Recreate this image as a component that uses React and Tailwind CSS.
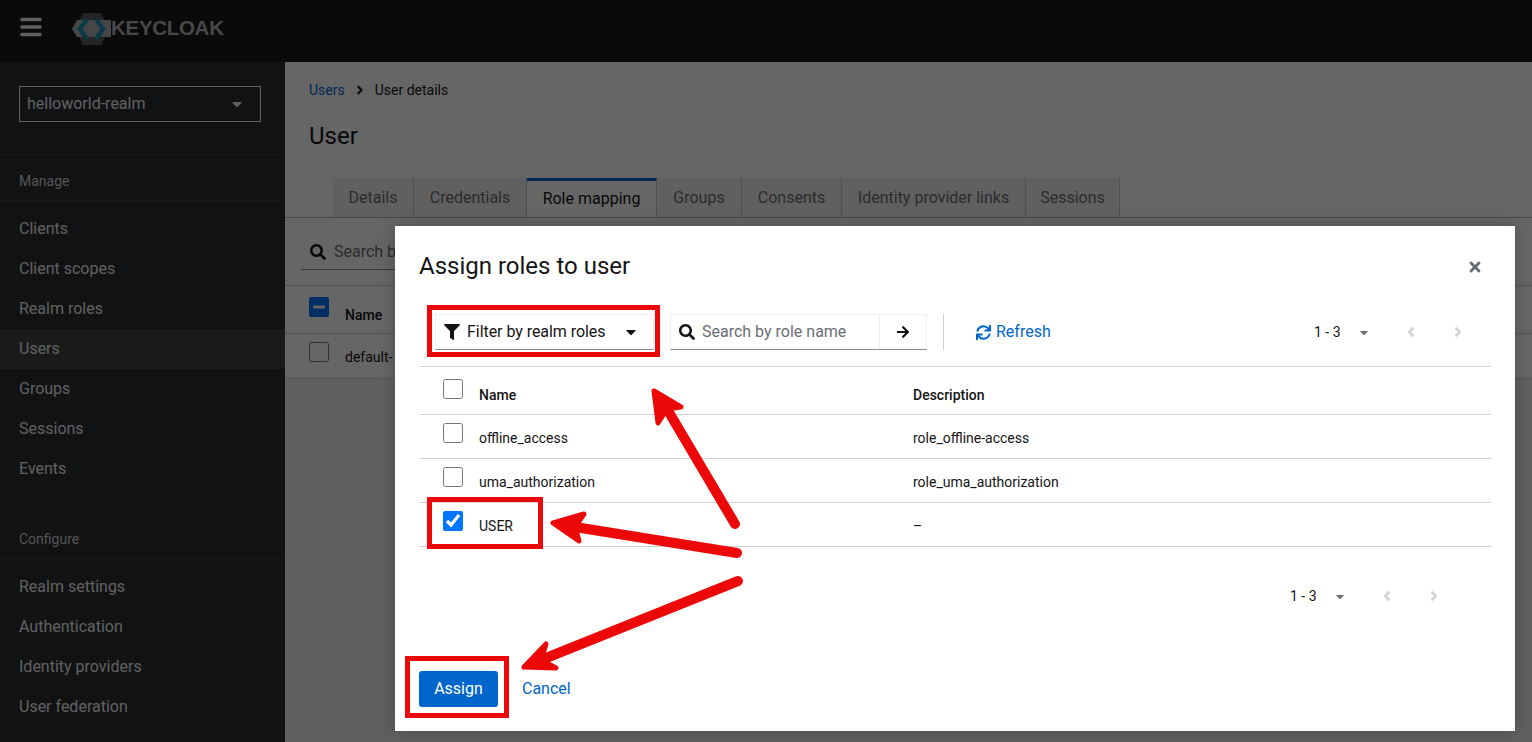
import React from "react";
import { FaBars, FaCaretDown, FaFilter, FaSearch, FaArrowRight, FaSync, FaTimes, FaAngleLeft, FaAngleRight } from "react-icons/fa";

const manage = ["Clients", "Client scopes", "Realm roles", "Users", "Groups", "Sessions", "Events"];
const configure = ["Realm settings", "Authentication", "Identity providers", "User federation"];
const tabs = [
  ["Details", "w-[81px]"],
  ["Credentials", "w-[113px]"],
  ["Role mapping", "w-[130px]"],
  ["Groups", "w-[85px]"],
  ["Consents", "w-[100px]"],
  ["Identity provider links", "w-[184px]"],
  ["Sessions", "w-[94px]"],
];
const rows = [
  ["offline_access", "role_offline-access", false],
  ["uma_authorization", "role_uma_authorization", false],
  ["USER", "–", true],
];

function NavItem({ label }) {
  const active = label === "Users";
  return (
    <div className={`h-10 pl-[19px] flex items-center text-base text-[#f0f0f0] ${active ? "bg-[#4f4f4f]/60" : ""}`}>
      {label}
    </div>
  );
}

function NavTitle({ label, className = "" }) {
  return (
    <div className={`h-[46px] pl-[19px] pt-4 text-sm leading-[21px] text-[#d2d2d2] border-b border-[#3c3f42] ${className}`}>
      {label}
    </div>
  );
}

function Pagination({ pr }) {
  return (
    <div className={`flex items-center ml-auto ${pr}`}>
      <span className="w-[27px] text-sm leading-none whitespace-nowrap text-[#151515]">1 - 3</span>
      <FaCaretDown className="ml-[18px] w-[10px] h-[13px] text-[#6a6e73]" />
      <FaAngleLeft className="ml-[37px] w-[10px] h-4 text-[#d2d2d2]" />
      <FaAngleRight className="ml-[37px] w-[10px] h-4 text-[#d2d2d2]" />
    </div>
  );
}

function Arrow({ tail, tip, arm1, arm2, join }) {
  return (
    <g>
      <line x1={tail[0]} y1={tail[1]} x2={join[0]} y2={join[1]} stroke="#ec0808" strokeWidth="10" strokeLinecap="round" />
      <polygon
        points={`${tip[0]},${tip[1]} ${arm1[0]},${arm1[1]} ${join[0]},${join[1]} ${arm2[0]},${arm2[1]}`}
        fill="#ec0808"
        stroke="#ec0808"
        strokeWidth="5"
        strokeLinejoin="round"
      />
    </g>
  );
}

export default function App() {
  return (
    <div className="relative w-[1532px] h-[742px] overflow-hidden bg-white font-['Roboto',sans-serif]">
      <header className="h-[62px] bg-[#191919] flex items-center">
        <FaBars className="ml-[19px] w-6 h-6 text-[#f0f0f0] -mt-[9px]" />
        <div className="ml-[29px] -mt-[5px] flex items-center">
          <svg width="40" height="32" viewBox="0 0 40 32" className="shrink-0">
            <polygon points="11,0 29,0 37,16 29,32 11,32 3,16" fill="#5a5a5a" />
            <polygon points="5,7 39,7 39,24 5,24 0,16" fill="#b0b0b0" />
            <path d="M15 6 L8 16 L15 26" fill="none" stroke="#1f8fb5" strokeWidth="4.5" />
            <path d="M24 6 L31 16 L24 26" fill="none" stroke="#1f8fb5" strokeWidth="4.5" />
          </svg>
          <span className="-ml-[1px] font-['Liberation_Sans',sans-serif] font-bold text-[20.5px] leading-none tracking-[-0.3px] text-[#b4b4b4]">KEYCLOAK</span>
        </div>
      </header>
      <div className="flex h-[680px]">
        <aside className="w-[285px] shrink-0 bg-[#2a2d30]">
          <div className="pt-6 pl-[19px] pb-8 border-b border-[#3c3f42]">
            <div className="w-[242px] h-9 border border-[#f0f0f0] flex items-center pl-[7px] pr-[18px] text-base text-[#f0f0f0]">
              <span>helloworld-realm</span>
              <FaCaretDown className="ml-auto w-[10px] h-4" />
            </div>
          </div>
          <NavTitle label="Manage" />
          <div className="pt-2">
            {manage.map((m) => <NavItem key={m} label={m} />)}
          </div>
          <NavTitle label="Configure" className="mt-6" />
          <div className="pt-2">
            {configure.map((m) => <NavItem key={m} label={m} />)}
          </div>
        </aside>
        <main className="flex-1 bg-[#efefef] flex flex-col">
          <div className="bg-white pl-6 h-[156px] flex flex-col border-b border-[#b5b5b5]">
            <div className="mt-[18px] flex items-center text-sm leading-5 text-[#151515]">
              <span className="text-[#06c]">Users</span>
              <FaAngleRight className="mx-[10px] w-[10px] h-[14px]" />
              <span>User details</span>
            </div>
            <h1 className="mt-5 text-2xl leading-8 text-[#151515]">User</h1>
            <div className="mt-[26px] ml-6 flex h-[39px] -mb-px">
              {tabs.map(([t, w]) => {
                const active = t === "Role mapping";
                return (
                  <div
                    key={t}
                    className={`${w} flex items-center justify-center text-base whitespace-nowrap border-r border-[#c8c8c8] ${
                      active ? "bg-white text-[#151515] border-t-[3px] border-t-[#06c]" : "bg-[#f0f0f0] text-[#6a6e73]"
                    }`}
                  >
                    {t}
                  </div>
                );
              })}
            </div>
          </div>
          <div className="bg-white h-[161px] border-b border-[#d2d2d2]">
            <div className="h-[68px] pt-4 pl-4 border-b border-[#d2d2d2]">
              <div className="w-[300px] h-9 border border-[#f0f0f0] border-b-[#8a8d90] flex items-center pl-2 text-base text-[#6a6e73]">
                <FaSearch className="w-4 h-4 text-[#151515]" />
                <span className="ml-2">Search b</span>
              </div>
            </div>
            <div className="h-12 flex border-b border-[#d2d2d2] pl-6">
              <input type="checkbox" ref={(el) => { if (el) el.indeterminate = true; }} className="m-0 mt-[11px] w-5 h-5" />
              <span className="ml-4 mt-[19px] text-sm leading-5 font-medium text-[#151515]">Name</span>
            </div>
            <div className="h-11 flex pl-6">
              <input type="checkbox" className="m-0 mt-2 w-5 h-5" />
              <span className="ml-4 mt-[13px] text-sm leading-5 text-[#151515]">default-</span>
            </div>
          </div>
        </main>
      </div>

      <div className="absolute inset-0 bg-black/60" />

      <section className="absolute left-[395px] top-[226px] w-[1120px] h-[505px] bg-white px-6 pt-6 pb-6 flex flex-col shadow-[0_0_16px_rgba(0,0,0,0.25)]">
        <div className="flex items-center h-8">
          <h2 className="text-2xl leading-8 text-[#151515]">Assign roles to user</h2>
          <FaTimes className="ml-auto mr-[10px] mt-[2px] w-3 h-4 text-[#6a6e73]" />
        </div>
        <div className="mt-8 pb-4 border-b border-[#d2d2d2] flex items-center h-[53px]">
          <div className="ml-4 w-[219px] h-9 border border-[#f0f0f0] border-b-[#8a8d90] flex items-center pl-2 text-base text-[#151515]">
            <FaFilter className="w-4 h-4 shrink-0" />
            <span className="ml-[7px] whitespace-nowrap tracking-[-0.05px]">Filter by realm roles</span>
            <FaCaretDown className="ml-auto mr-[17px] w-[10px] h-4" />
          </div>
          <div className="ml-4 w-[257px] h-9 border border-[#f0f0f0] border-b-[#8a8d90] flex items-center text-base">
            <div className="flex items-center flex-1 pl-2 h-full text-[#6a6e73]">
              <FaSearch className="w-4 h-4 text-[#151515]" />
              <span className="ml-[7px] whitespace-nowrap">Search by role name</span>
            </div>
            <div className="w-[47px] h-full border-l border-[#f0f0f0] flex items-center justify-center">
              <FaArrowRight className="w-[14px] h-[14px] text-[#151515]" />
            </div>
          </div>
          <div className="ml-4 w-px h-9 bg-[#d2d2d2]" />
          <div className="ml-8 flex items-center text-base text-[#06c]">
            <FaSync className="w-[15px] h-[15px]" />
            <span className="ml-[5px]">Refresh</span>
          </div>
          <Pagination pr="pr-7" />
        </div>

        <div className="h-12 flex border-b border-[#d2d2d2] text-sm text-[#151515] font-medium">
          <div className="w-[60px] pl-6 pt-3 shrink-0">
            <input type="checkbox" className="block m-0 w-5 h-5" />
          </div>
          <div className="w-[434px] pt-[18px] leading-5">Name</div>
          <div className="pt-[18px] leading-5">Description</div>
        </div>
        {rows.map(([n, d, c]) => (
          <div key={n} className="h-11 flex border-b border-[#d2d2d2] text-sm text-[#151515]">
            <div className="w-[60px] pl-6 pt-2 shrink-0">
              <input type="checkbox" defaultChecked={c} className="block m-0 w-5 h-5" />
            </div>
            <div className="w-[434px] pt-[13px] leading-5">{n}</div>
            <div className="pt-[13px] leading-5">{d}</div>
          </div>
        ))}

        <div className="mt-[41px] flex items-center h-4">
          <Pagination pr="pr-[52px]" />
        </div>

        <div className="mt-auto flex items-center">
          <button className="w-[79px] h-9 bg-[#06c] text-white text-base rounded-[3px]">Assign</button>
          <span className="ml-6 text-base text-[#06c]">Cancel</span>
        </div>
      </section>

      <div className="absolute left-[427px] top-[305px] w-[233px] h-[52px] border-[5px] border-[#ec0808]" />
      <div className="absolute left-[427px] top-[497px] w-[116px] h-[52px] border-[5px] border-[#ec0808]" />
      <div className="absolute left-[405px] top-[656px] w-[104px] h-[62px] border-[5px] border-[#ec0808]" />

      <svg className="absolute inset-0 pointer-events-none" width="1532" height="742" viewBox="0 0 1532 742">
        <Arrow tail={[735, 524]} join={[667, 409]} tip={[654, 391]} arm1={[681, 407]} arm2={[658, 423]} />
        <Arrow tail={[737, 553]} join={[575, 527]} tip={[553, 523]} arm1={[584, 514]} arm2={[579, 541]} />
        <Arrow tail={[738, 581]} join={[541, 660]} tip={[524, 667]} arm1={[546, 644]} arm2={[556, 668]} />
      </svg>
    </div>
  );
}
